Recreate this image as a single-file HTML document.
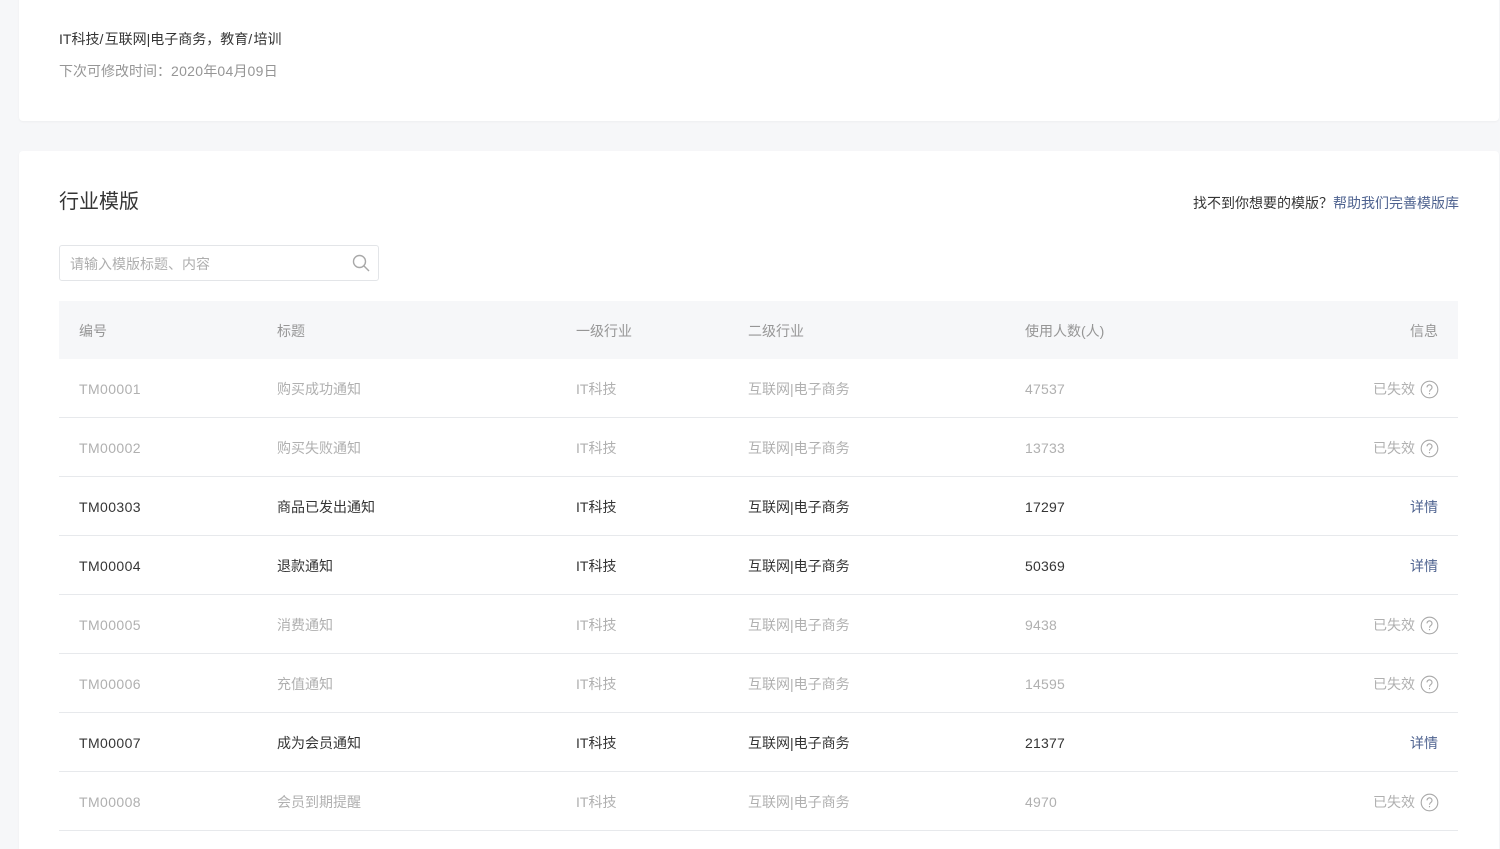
<!DOCTYPE html>
<html><head><meta charset="utf-8"><style>
html,body{margin:0;padding:0;width:1500px;height:849px;overflow:hidden;background:#f6f7f9;font-family:"Liberation Sans","Noto Sans CJK SC",sans-serif;font-size:14px;color:#353535}
#wrap{position:absolute;left:0;top:0;width:1500px;height:849px;overflow:hidden}
.card{position:absolute;left:19px;width:1480px;background:#fff;border-radius:4px;box-shadow:0 1px 2px rgba(0,0,0,.04)}
.t{position:absolute;white-space:nowrap;line-height:20px}
.row{position:absolute;left:59px;width:1399px;height:58px;border-bottom:1px solid #e7e9ec}
.row span{position:absolute;top:20px;line-height:20px;white-space:nowrap}
.off{color:#b0b0b0}
.a{left:20px;letter-spacing:.4px}.b{left:218px}.c{left:517px}.d{left:689px}.e{left:966px;letter-spacing:.2px}
.f{right:20px}.g{right:43px}
.link{color:#4f6390}
.s{letter-spacing:1.3px}
.n{letter-spacing:.3px}
.q{position:absolute;right:19px;top:21px}
svg{position:absolute}
</style></head><body><div id="wrap">
<div class="card" style="top:-10px;height:131px"></div>
<div class="t" style="left:59px;top:29px">IT科技<b class="s" style="font-weight:400">/</b>互联网|电子商务，教育<b class="s" style="font-weight:400">/</b>培训</div>
<div class="t" style="left:59px;top:61px;color:#969696">下次可修改时间：<b class="n" style="font-weight:400">2020</b>年<b class="n" style="font-weight:400">04</b>月<b class="n" style="font-weight:400">09</b>日</div>
<div class="card" style="top:151px;height:698px;border-radius:4px 4px 0 0"></div>
<div class="t" style="left:59px;top:189px;font-size:20px;line-height:26px">行业模版</div>
<div class="t" style="left:1193px;top:193px">找不到你想要的模版？</div>
<div class="t link" style="left:1333px;top:193px">帮助我们完善模版库</div>
<div style="position:absolute;left:59px;top:245px;width:318px;height:34px;border:1px solid #e3e5e8;border-radius:3px;background:#fff"></div>
<div class="t" style="left:70px;top:254px;color:#aeaeae">请输入模版标题、内容</div>
<svg style="left:352px;top:254px" width="18" height="18" viewBox="0 0 18 18" fill="none" stroke="#a8a8a8" stroke-width="1.4"><circle cx="7.5" cy="7.5" r="6"/><path d="M12 12l5 5"/></svg>
<div style="position:absolute;left:59px;top:301px;width:1399px;height:58px;background:#f6f7f9;color:#969696">
<span class="t" style="left:20px;top:20px">编号</span><span class="t" style="left:218px;top:20px">标题</span><span class="t" style="left:517px;top:20px">一级行业</span><span class="t" style="left:689px;top:20px">二级行业</span><span class="t" style="left:966px;top:20px">使用人数(人)</span><span class="t" style="right:20px;top:20px">信息</span></div>

<div class="row off" style="top:359px"><span class="a">TM00001</span><span class="b">购买成功通知</span><span class="c">IT科技</span><span class="d">互联网|电子商务</span><span class="e">47537</span><span class="g">已失效</span><svg class="q" width="19" height="19" viewBox="0 0 19 19" fill="none" stroke="#a8a8a8"><circle cx="9.5" cy="9.5" r="8.3" stroke-width="1.1"/><path d="M7 7.4a2.5 2.5 0 1 1 3.8 2.1c-.9.6-1.3 1.1-1.3 2.2M9.5 13v1.2" stroke-width="1.1"/></svg></div>
<div class="row off" style="top:418px"><span class="a">TM00002</span><span class="b">购买失败通知</span><span class="c">IT科技</span><span class="d">互联网|电子商务</span><span class="e">13733</span><span class="g">已失效</span><svg class="q" width="19" height="19" viewBox="0 0 19 19" fill="none" stroke="#a8a8a8"><circle cx="9.5" cy="9.5" r="8.3" stroke-width="1.1"/><path d="M7 7.4a2.5 2.5 0 1 1 3.8 2.1c-.9.6-1.3 1.1-1.3 2.2M9.5 13v1.2" stroke-width="1.1"/></svg></div>
<div class="row" style="top:477px"><span class="a">TM00303</span><span class="b">商品已发出通知</span><span class="c">IT科技</span><span class="d">互联网|电子商务</span><span class="e">17297</span><span class="f link">详情</span></div>
<div class="row" style="top:536px"><span class="a">TM00004</span><span class="b">退款通知</span><span class="c">IT科技</span><span class="d">互联网|电子商务</span><span class="e">50369</span><span class="f link">详情</span></div>
<div class="row off" style="top:595px"><span class="a">TM00005</span><span class="b">消费通知</span><span class="c">IT科技</span><span class="d">互联网|电子商务</span><span class="e">9438</span><span class="g">已失效</span><svg class="q" width="19" height="19" viewBox="0 0 19 19" fill="none" stroke="#a8a8a8"><circle cx="9.5" cy="9.5" r="8.3" stroke-width="1.1"/><path d="M7 7.4a2.5 2.5 0 1 1 3.8 2.1c-.9.6-1.3 1.1-1.3 2.2M9.5 13v1.2" stroke-width="1.1"/></svg></div>
<div class="row off" style="top:654px"><span class="a">TM00006</span><span class="b">充值通知</span><span class="c">IT科技</span><span class="d">互联网|电子商务</span><span class="e">14595</span><span class="g">已失效</span><svg class="q" width="19" height="19" viewBox="0 0 19 19" fill="none" stroke="#a8a8a8"><circle cx="9.5" cy="9.5" r="8.3" stroke-width="1.1"/><path d="M7 7.4a2.5 2.5 0 1 1 3.8 2.1c-.9.6-1.3 1.1-1.3 2.2M9.5 13v1.2" stroke-width="1.1"/></svg></div>
<div class="row" style="top:713px"><span class="a">TM00007</span><span class="b">成为会员通知</span><span class="c">IT科技</span><span class="d">互联网|电子商务</span><span class="e">21377</span><span class="f link">详情</span></div>
<div class="row off" style="top:772px"><span class="a">TM00008</span><span class="b">会员到期提醒</span><span class="c">IT科技</span><span class="d">互联网|电子商务</span><span class="e">4970</span><span class="g">已失效</span><svg class="q" width="19" height="19" viewBox="0 0 19 19" fill="none" stroke="#a8a8a8"><circle cx="9.5" cy="9.5" r="8.3" stroke-width="1.1"/><path d="M7 7.4a2.5 2.5 0 1 1 3.8 2.1c-.9.6-1.3 1.1-1.3 2.2M9.5 13v1.2" stroke-width="1.1"/></svg></div>
</div></body></html>
